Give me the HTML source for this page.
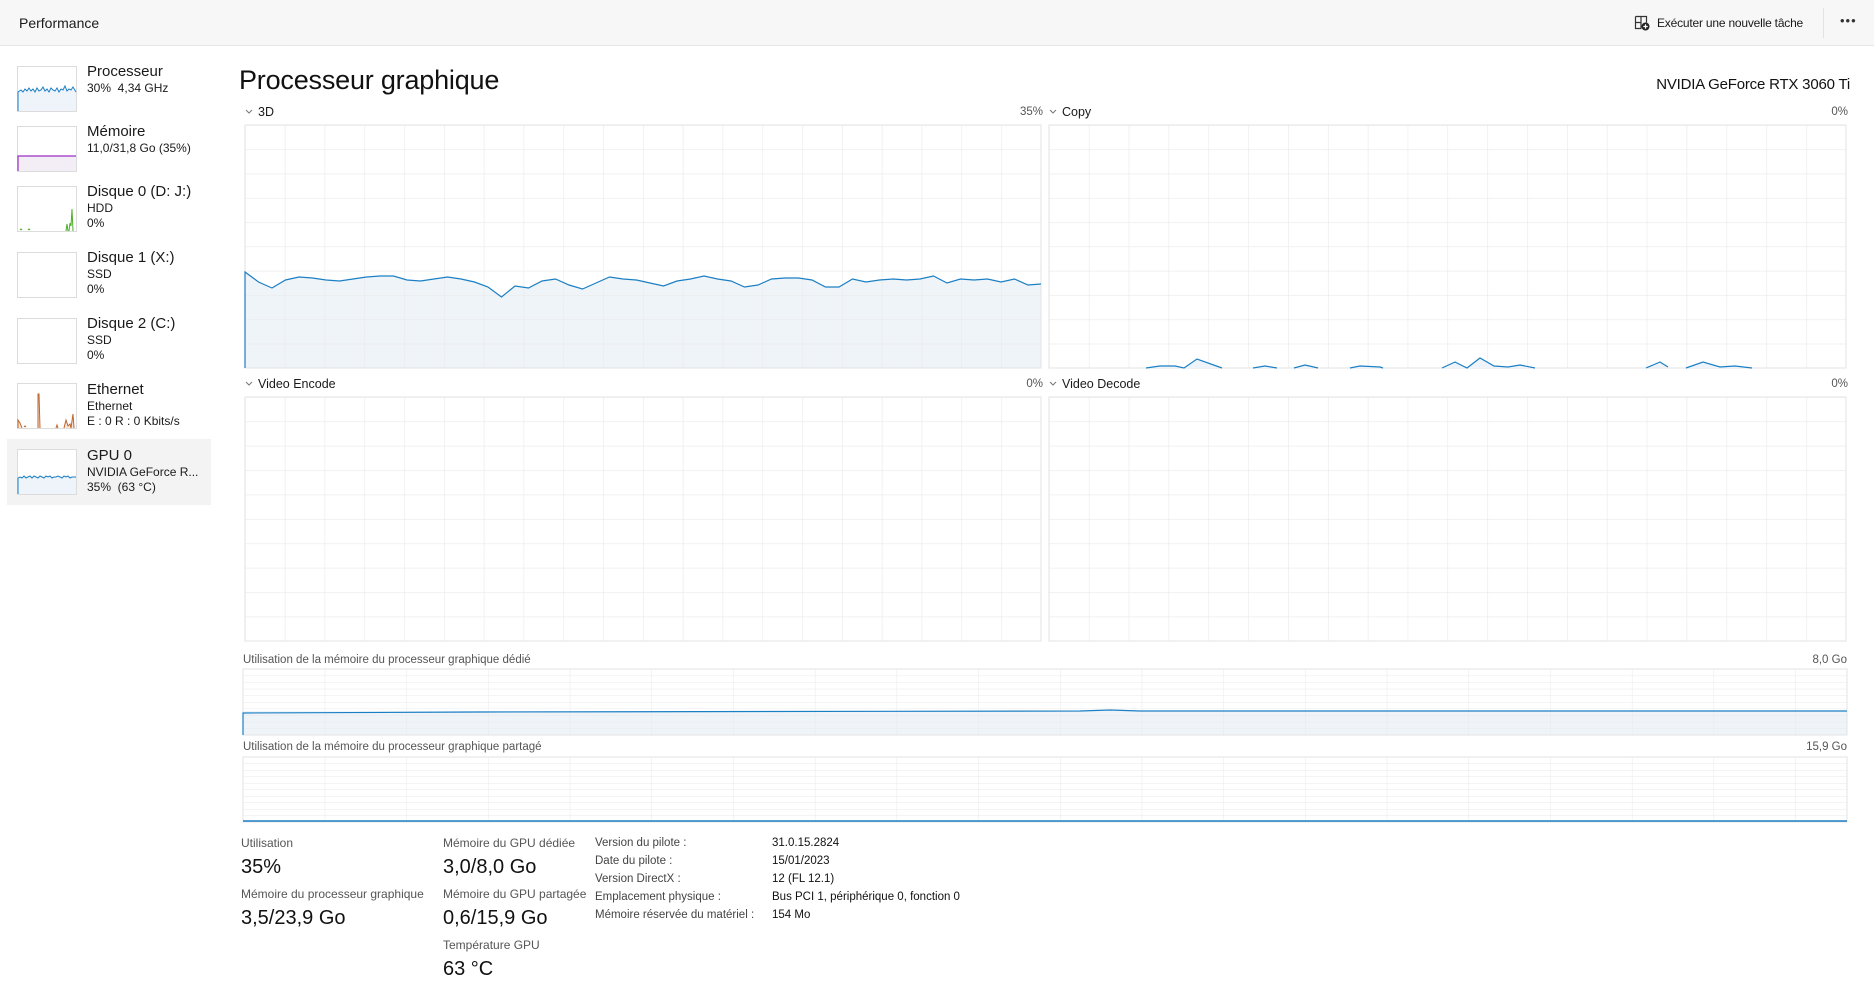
<!DOCTYPE html>
<html><head><meta charset="utf-8">
<style>
*{margin:0;padding:0;box-sizing:border-box}
body{width:1874px;height:999px;background:#fff;font-family:"Liberation Sans",sans-serif;color:#1a1a1a;position:relative;overflow:hidden}
.a{position:absolute;white-space:nowrap}
.hdr{position:absolute;left:0;top:0;width:1874px;height:46px;background:#f7f7f7;border-bottom:1px solid #e6e6e6}
.t{font-size:15px;line-height:18px}
.s{font-size:12px;line-height:15px}
.lbl{font-size:12.5px;line-height:15px;color:#1a1a1a}
.g{font-size:11.5px;color:#555;line-height:14px}
.sl{font-size:12px;color:#555;line-height:15px}
.sv{font-size:20px;line-height:24px;color:#111}
.d{font-size:11.5px;line-height:15px;color:#444}
.dv{font-size:11.5px;line-height:15px;color:#111}
</style></head><body>
<div class="hdr"></div>
<div class="a" style="left:19px;top:14px;font-size:14px;line-height:18px;color:#1a1a1a">Performance</div>
<svg class="a" style="left:1634px;top:15px" width="16" height="16" viewBox="0 0 16 16"><path d="M1.5 1.5h11v6M1.5 1.5v12h6M7 1.5v12M1.5 7.5h5.5" fill="none" stroke="#333" stroke-width="1.2"/><circle cx="11.5" cy="11.5" r="4" fill="#222"/><path d="M11.5 9.3v4.4M9.3 11.5h4.4" stroke="#fff" stroke-width="1.2"/></svg>
<div class="a" style="left:1657px;top:15px;font-size:12px;line-height:16px;color:#1a1a1a;letter-spacing:-0.2px">Exécuter une nouvelle tâche</div>
<div class="a" style="left:1823px;top:8px;width:1px;height:30px;background:#e3e3e3"></div>
<div class="a" style="left:1840px;top:13px;font-size:13px;letter-spacing:1px;color:#333">•••</div>

<div class="a" style="left:7px;top:439px;width:204px;height:66px;background:#f3f3f3"></div>

<svg class="a" style="left:0;top:0" width="1874" height="999">
<defs>
<pattern id="pL" x="245" y="125" width="39.8" height="24.3" patternUnits="userSpaceOnUse"><path d="M0 0V24.3M0 0H39.8" stroke="#e9e9e9" stroke-width="1.2" fill="none"/></pattern>
<pattern id="pL2" x="245" y="397" width="39.8" height="24.4" patternUnits="userSpaceOnUse"><path d="M0 0V24.4M0 0H39.8" stroke="#e9e9e9" stroke-width="1.2" fill="none"/></pattern>
<pattern id="pR" x="1049" y="125" width="39.85" height="24.3" patternUnits="userSpaceOnUse"><path d="M0 0V24.3M0 0H39.85" stroke="#e9e9e9" stroke-width="1.2" fill="none"/></pattern>
<pattern id="pR2" x="1049" y="397" width="39.85" height="24.4" patternUnits="userSpaceOnUse"><path d="M0 0V24.4M0 0H39.85" stroke="#e9e9e9" stroke-width="1.2" fill="none"/></pattern>
<pattern id="pM1" x="243" y="669" width="81.7" height="6.6" patternUnits="userSpaceOnUse"><path d="M0 0V6.6M0 0H81.7" stroke="#e9e9e9" stroke-width="1" fill="none"/></pattern>
<pattern id="pM2" x="243" y="757" width="81.7" height="6.5" patternUnits="userSpaceOnUse"><path d="M0 0V6.5M0 0H81.7" stroke="#e9e9e9" stroke-width="1" fill="none"/></pattern>
</defs>
<g stroke="#dcdcdc" fill="#fff">
<rect x="17.5" y="66.5" width="59" height="45"/>
<rect x="17.5" y="126.5" width="59" height="45"/>
<rect x="17.5" y="186.5" width="59" height="45"/>
<rect x="17.5" y="252.5" width="59" height="45"/>
<rect x="17.5" y="318.5" width="59" height="45"/>
<rect x="17.5" y="383.5" width="59" height="45"/>
<rect x="17.5" y="449.5" width="59" height="45"/>
</g>
<path d="M18 111V92L21 90L23 92L25 89L27 91L29 88L31 91L33 89L35 92L37 88L39 91L41 90L43 87L45 91L47 89L49 92L51 88L53 90L55 91L57 88L59 92L61 89L63 90L65 86L67 91L69 89L71 90L73 87L76 92V111Z" fill="#eef4fa"/>
<path d="M18 111V92L21 90L23 92L25 89L27 91L29 88L31 91L33 89L35 92L37 88L39 91L41 90L43 87L45 91L47 89L49 92L51 88L53 90L55 91L57 88L59 92L61 89L63 90L65 86L67 91L69 89L71 90L73 87L76 92" fill="none" stroke="#1b7fc4" stroke-width="1"/>
<rect x="18" y="156" width="58" height="15" fill="#f3eef5"/>
<path d="M18 171V156H76" fill="none" stroke="#9b30c4" stroke-width="1.2"/>
<path d="M20 230l1-1 1 1M28 230l1-1 1 1M66 231l1-7 1 7M69 231l1-8 1 3 1-17 1 22" fill="none" stroke="#4caf2a" stroke-width="1"/>
<path d="M18 428V420l2 3 2 5M24 427l1-1 1 1M38 428V394l1 0 1 34M56 428l1-3 1 3M64 428l2-8 2 6 2-2 1 4 2-14 1 14" fill="#f6e9df" stroke="#c0642a" stroke-width="1"/>
<path d="M18 494V478L20 477L22 478L24 476L26 478L28 477L30 476L32 478L34 476L36 477L38 478L40 476L42 477L44 478L46 476L48 477L50 476L52 478L54 477L56 477L58 476L60 477L62 478L64 476L66 477L68 476L70 478L72 477L76 477V494Z" fill="#eef4fa"/>
<path d="M18 494V478L20 477L22 478L24 476L26 478L28 477L30 476L32 478L34 476L36 477L38 478L40 476L42 477L44 478L46 476L48 477L50 476L52 478L54 477L56 477L58 476L60 477L62 478L64 476L66 477L68 476L70 478L72 477L76 477" fill="none" stroke="#1b7fc4" stroke-width="1"/>

<path d="M245 368V272L258.5 282L272 288L285.5 280L299 277L312.5 278L326 280L339.5 281L353 279L366.5 277L380 276L393.5 276L407 280L420.5 281L434 279L447.5 277L461 279L474.5 282L488 287L501.5 297L515 286L528.5 288L542 281L555.5 279L569 285L582.5 289L596 283L609.5 277L623 279L636.5 280L650 283L663.5 286L677 281L690.5 279L704 276L717.5 279L731 281L744.5 287L758 285L771.5 279L785 278L798.5 278L812 280L825.5 287L839 287L852.5 279L866 282L879.5 280L893 279L906.5 280L920 279L933.5 276L947 283L960.5 279L974 280L987.5 279L1001 282L1014.5 279L1028 285L1041 284V368Z" fill="#eff4f9"/>
<rect x="245" y="125" width="796" height="243" fill="url(#pL)" stroke="#e3e3e3"/>
<path d="M245 368V272L258.5 282L272 288L285.5 280L299 277L312.5 278L326 280L339.5 281L353 279L366.5 277L380 276L393.5 276L407 280L420.5 281L434 279L447.5 277L461 279L474.5 282L488 287L501.5 297L515 286L528.5 288L542 281L555.5 279L569 285L582.5 289L596 283L609.5 277L623 279L636.5 280L650 283L663.5 286L677 281L690.5 279L704 276L717.5 279L731 281L744.5 287L758 285L771.5 279L785 278L798.5 278L812 280L825.5 287L839 287L852.5 279L866 282L879.5 280L893 279L906.5 280L920 279L933.5 276L947 283L960.5 279L974 280L987.5 279L1001 282L1014.5 279L1028 285L1041 284" fill="none" stroke="#1b7fc4" stroke-width="1.2"/>
<rect x="1049" y="125" width="797" height="243" fill="url(#pR)" stroke="#e3e3e3"/>
<path d="M1146 368L1160 366L1175 366L1184 368L1197 359L1222 368M1253 368L1265 366L1277 368M1294 368L1305 365L1318 368M1350 368L1360 366L1380 367L1383 368M1442 368L1455 362L1467 368L1480 358L1494 366L1508 367L1520 365L1535 368M1646 368L1660 362L1668 367M1686 368L1703 362L1720 367L1735 366L1752 368" fill="#eef4fa" stroke="#1b7fc4" stroke-width="1.2"/>
<rect x="245" y="397" width="796" height="244" fill="url(#pL2)" stroke="#e3e3e3"/>
<rect x="1049" y="397" width="797" height="244" fill="url(#pR2)" stroke="#e3e3e3"/>
<rect x="243" y="711" width="1604" height="24" fill="#eff4f9"/>
<rect x="243" y="669" width="1604" height="66" fill="url(#pM1)" stroke="#e3e3e3"/>
<path d="M243 735V713L480 712L1080 711L1110 710L1140 711L1847 711" fill="none" stroke="#1b7fc4" stroke-width="1.2"/>
<rect x="243" y="757" width="1604" height="65" fill="url(#pM2)" stroke="#e3e3e3"/>
<path d="M243 821H1847" stroke="#1b7fc4" stroke-width="1.5"/>
<path d="M246 110l3 3 3-3M1050 110l3 3 3-3M246 382l3 3 3-3M1050 382l3 3 3-3" fill="none" stroke="#777" stroke-width="1"/>
</svg>

<div class="a t" style="left:87px;top:63px">Processeur</div>
<div class="a s" style="left:87px;top:81px">30%&nbsp; 4,34 GHz</div>
<div class="a t" style="left:87px;top:123px">Mémoire</div>
<div class="a s" style="left:87px;top:141px">11,0/31,8 Go (35%)</div>
<div class="a t" style="left:87px;top:183px">Disque 0 (D: J:)</div>
<div class="a s" style="left:87px;top:201px">HDD</div>
<div class="a s" style="left:87px;top:216px">0%</div>
<div class="a t" style="left:87px;top:249px">Disque 1 (X:)</div>
<div class="a s" style="left:87px;top:267px">SSD</div>
<div class="a s" style="left:87px;top:282px">0%</div>
<div class="a t" style="left:87px;top:315px">Disque 2 (C:)</div>
<div class="a s" style="left:87px;top:333px">SSD</div>
<div class="a s" style="left:87px;top:348px">0%</div>
<div class="a t" style="left:87px;top:381px">Ethernet</div>
<div class="a s" style="left:87px;top:399px">Ethernet</div>
<div class="a s" style="left:87px;top:414px">E : 0 R : 0 Kbits/s</div>
<div class="a t" style="left:87px;top:447px">GPU 0</div>
<div class="a s" style="left:87px;top:465px">NVIDIA GeForce R...</div>
<div class="a s" style="left:87px;top:480px">35%&nbsp; (63 °C)</div>

<div class="a" style="left:239px;top:63px;font-size:27px;line-height:34px;color:#111;letter-spacing:-0.2px">Processeur graphique</div>
<div class="a" style="right:24px;top:75px;font-size:15px;line-height:20px;color:#111;letter-spacing:-0.2px">NVIDIA GeForce RTX 3060 Ti</div>
<div class="a lbl" style="left:258px;top:105px">3D</div>
<div class="a g" style="right:831px;top:105px">35%</div>
<div class="a lbl" style="left:1062px;top:105px">Copy</div>
<div class="a g" style="right:26px;top:105px">0%</div>
<div class="a lbl" style="left:258px;top:377px">Video Encode</div>
<div class="a g" style="right:831px;top:377px">0%</div>
<div class="a lbl" style="left:1062px;top:377px">Video Decode</div>
<div class="a g" style="right:26px;top:377px">0%</div>
<div class="a g" style="left:243px;top:653px">Utilisation de la mémoire du processeur graphique dédié</div>
<div class="a g" style="right:27px;top:653px">8,0 Go</div>
<div class="a g" style="left:243px;top:740px">Utilisation de la mémoire du processeur graphique partagé</div>
<div class="a g" style="right:27px;top:740px">15,9 Go</div>

<div class="a sl" style="left:241px;top:836px">Utilisation</div>
<div class="a sv" style="left:241px;top:855px">35%</div>
<div class="a sl" style="left:241px;top:887px">Mémoire du processeur graphique</div>
<div class="a sv" style="left:241px;top:906px">3,5/23,9 Go</div>
<div class="a sl" style="left:443px;top:836px">Mémoire du GPU dédiée</div>
<div class="a sv" style="left:443px;top:855px">3,0/8,0 Go</div>
<div class="a sl" style="left:443px;top:887px">Mémoire du GPU partagée</div>
<div class="a sv" style="left:443px;top:906px">0,6/15,9 Go</div>
<div class="a sl" style="left:443px;top:938px">Température GPU</div>
<div class="a sv" style="left:443px;top:957px">63 °C</div>

<div class="a d" style="left:595px;top:836px">Version du pilote :</div>
<div class="a d" style="left:595px;top:854px">Date du pilote :</div>
<div class="a d" style="left:595px;top:872px">Version DirectX :</div>
<div class="a d" style="left:595px;top:890px">Emplacement physique :</div>
<div class="a d" style="left:595px;top:908px">Mémoire réservée du matériel :</div>
<div class="a dv" style="left:772px;top:836px">31.0.15.2824</div>
<div class="a dv" style="left:772px;top:854px">15/01/2023</div>
<div class="a dv" style="left:772px;top:872px">12 (FL 12.1)</div>
<div class="a dv" style="left:772px;top:890px">Bus PCI 1, périphérique 0, fonction 0</div>
<div class="a dv" style="left:772px;top:908px">154 Mo</div>
</body></html>
